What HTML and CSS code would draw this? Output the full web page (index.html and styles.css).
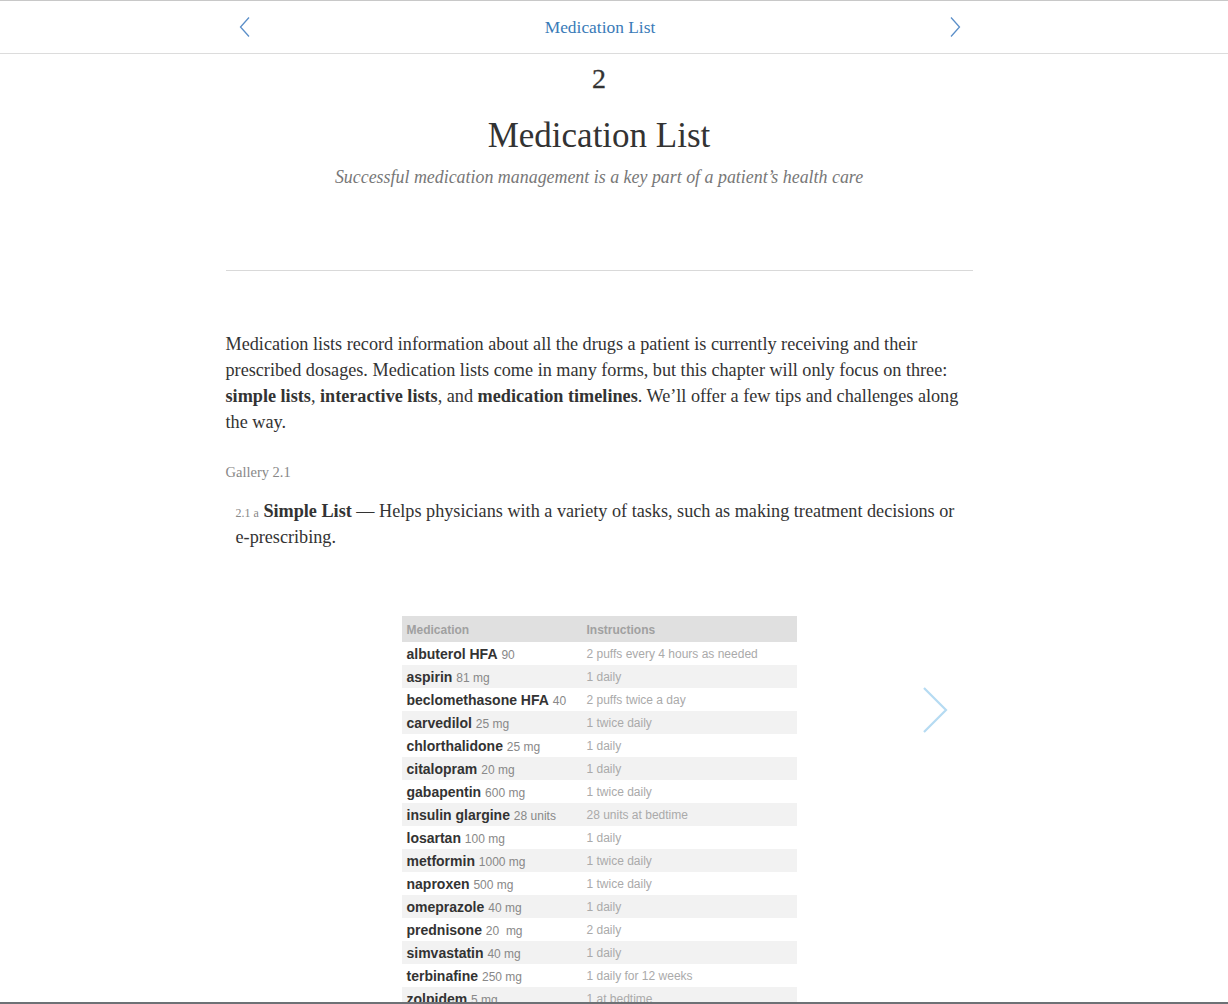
FILE: index.html
```html
<!DOCTYPE html>
<html>
<head>
<meta charset="utf-8">
<link rel="stylesheet" href="styles.css">
</head>
<body>
<div class="page">
  <header class="nav">
    <div class="nav-inner">
      <svg class="nav-arrow" width="12" height="22" viewBox="0 0 12 22"><polyline points="10,1.5 1.5,11 10,20.5" fill="none" stroke="#5b8fc9" stroke-width="1.3"/></svg>
      <span class="nav-title">Medication List</span>
      <svg class="nav-arrow" width="12" height="22" viewBox="0 0 12 22"><polyline points="2,1.5 10.5,11 2,20.5" fill="none" stroke="#5b8fc9" stroke-width="1.3"/></svg>
    </div>
  </header>
  <main class="content">
    <section class="chapter-head">
      <div class="chapter-num">2</div>
      <h1 class="chapter-title">Medication List</h1>
      <p class="chapter-sub">Successful medication management is a key part of a patient’s health care</p>
    </section>
    <hr class="rule">
    <p class="body-text">Medication lists record information about all the drugs a patient is currently receiving and their prescribed dosages. Medication lists come in many forms, but this chapter will only focus on three: <b>simple lists</b>, <b>interactive lists</b>, and <b>medication timelines</b>. We’ll offer a few tips and challenges along the way.</p>
    <div class="gallery-label">Gallery 2.1</div>
    <p class="caption"><span class="cap-num">2.1 a</span> <b>Simple List</b> — Helps physicians with a variety of tasks, such as making treatment decisions or <span class="nowrap">e-prescribing.</span></p>
    <div class="gallery">
      <table class="med-table">
        <thead>
          <tr><th>Medication</th><th>Instructions</th></tr>
        </thead>
        <tbody>
          <tr><td><b>albuterol HFA</b> <span class="dose">90</span></td><td>2 puffs every 4 hours as needed</td></tr>
          <tr><td><b>aspirin</b> <span class="dose">81 mg</span></td><td>1 daily</td></tr>
          <tr><td><b>beclomethasone HFA</b> <span class="dose">40</span></td><td>2 puffs twice a day</td></tr>
          <tr><td><b>carvedilol</b> <span class="dose">25 mg</span></td><td>1 twice daily</td></tr>
          <tr><td><b>chlorthalidone</b> <span class="dose">25 mg</span></td><td>1 daily</td></tr>
          <tr><td><b>citalopram</b> <span class="dose">20 mg</span></td><td>1 daily</td></tr>
          <tr><td><b>gabapentin</b> <span class="dose">600 mg</span></td><td>1 twice daily</td></tr>
          <tr><td><b>insulin glargine</b> <span class="dose">28 units</span></td><td>28 units at bedtime</td></tr>
          <tr><td><b>losartan</b> <span class="dose">100 mg</span></td><td>1 daily</td></tr>
          <tr><td><b>metformin</b> <span class="dose">1000 mg</span></td><td>1 twice daily</td></tr>
          <tr><td><b>naproxen</b> <span class="dose">500 mg</span></td><td>1 twice daily</td></tr>
          <tr><td><b>omeprazole</b> <span class="dose">40 mg</span></td><td>1 daily</td></tr>
          <tr><td><b>prednisone</b> <span class="dose">20&nbsp; mg</span></td><td>2 daily</td></tr>
          <tr><td><b>simvastatin</b> <span class="dose">40 mg</span></td><td>1 daily</td></tr>
          <tr><td><b>terbinafine</b> <span class="dose">250 mg</span></td><td>1 daily for 12 weeks</td></tr>
          <tr><td><b>zolpidem</b> <span class="dose">5 mg</span></td><td>1 at bedtime</td></tr>
        </tbody>
      </table>
      <svg class="gallery-next" width="28" height="48" viewBox="0 0 28 48"><polyline points="2,2 24,24 2,46" fill="none" stroke="#b5dbf2" stroke-width="2.2"/></svg>
    </div>
  </main>
</div>
</body>
</html>
```

FILE: styles.css
```css
html, body {
  margin: 0;
  padding: 0;
  height: 100%;
  background: #fff;
}
body {
  font-family: "Liberation Serif", Georgia, serif;
  color: #333;
}
.page {
  height: 100vh;
  box-sizing: border-box;
  border-top: 1px solid #c8c8c8;
  border-bottom: 2px solid #6d7175;
  padding-right: 31px;
  overflow: hidden;
}
.nav {
  height: 52px;
  border-bottom: 1px solid #dcdcdc;
  margin-right: -31px;
  padding-right: 31px;
}
.nav-inner {
  width: 722px;
  margin: 0 auto;
  padding-left: 3px;
  height: 100%;
  display: flex;
  align-items: center;
  justify-content: space-between;
}
.nav-title {
  color: #3a7bb8;
  font-size: 17.4px;
  padding-top: 1px;
}
.content {
  width: 747px;
  margin: 0 auto;
  padding-left: 1px;
}
.chapter-head {
  text-align: center;
  padding-top: 10px;
}
.chapter-num {
  font-size: 28px;
  line-height: 30px;
  color: #333;
  -webkit-text-stroke: 0.3px #333;
}
.chapter-title {
  font-weight: normal;
  font-size: 35px;
  line-height: 40px;
  margin: 22px 0 0;
  color: #333;
}
.chapter-sub {
  font-style: italic;
  font-size: 17.9px;
  color: #777;
  margin: 11px 0 0;
}
.rule {
  border: 0;
  border-top: 1px solid #d9d9d9;
  margin: 82px 0 0;
}
.body-text {
  font-size: 18.2px;
  line-height: 26px;
  margin: 60px 0 0;
  color: #333;
}
.gallery-label {
  font-size: 14.5px;
  color: #888;
  margin-top: 29px;
}
.caption {
  font-size: 18.2px;
  line-height: 26px;
  margin: 17px 0 0;
  padding-left: 10px;
}
.caption span, .caption b {
  line-height: 1;
}
.nowrap {
  white-space: nowrap;
}
.cap-num {
  font-size: 12px;
  color: #888;
}
.gallery {
  position: relative;
  display: flex;
  justify-content: center;
  padding-top: 66px;
}
.med-table {
  width: 395px;
  border-collapse: collapse;
  font-family: "Liberation Sans", Arial, sans-serif;
}
.med-table th {
  background: #e0e0e0;
  color: #a0a0a0;
  font-size: 12px;
  font-weight: bold;
  text-align: left;
  height: 24px;
  padding: 2px 5px 0;
}
.med-table td {
  height: 23px;
  padding: 0 5px;
  font-size: 12px;
  color: #aaa;
  vertical-align: middle;
}
.med-table td:first-child {
  width: 170px;
  font-size: 14px;
  color: #333;
}
.med-table .dose {
  font-size: 12px;
  color: #888;
}
.med-table tbody tr:nth-child(even) td {
  background: #f2f2f2;
}
.gallery-next {
  position: absolute;
  right: 23px;
  top: 136px;
}
```
